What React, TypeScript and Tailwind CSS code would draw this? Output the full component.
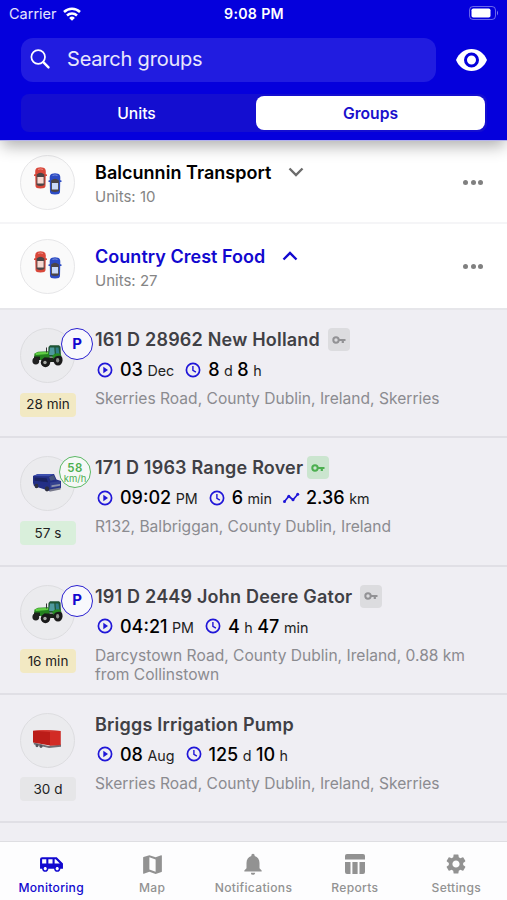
import type { ReactNode } from "react";
import { MdAirportShuttle, MdMap, MdNotifications, MdSettings } from "react-icons/md";

const groups = [
  { name: "Balcunnin Transport", units: 10, open: false },
  { name: "Country Crest Food", units: 27, open: true },
];

const units = [
  {
    name: "161 D 28962 New Holland",
    picture: <Tractor />,
    parked: true,
    ignition: "off",
    ago: "28 min",
    agoColor: "bg-[#f2e9c3]",
    start: ["03", "Dec"],
    duration: ["8", "d", "8", "h"],
    address: "Skerries Road, County Dublin, Ireland, Skerries",
  },
  {
    name: "171 D 1963 Range Rover",
    picture: <Jeep />,
    speed: 58,
    ignition: "on",
    ago: "57 s",
    agoColor: "bg-[#d9efdb]",
    start: ["09:02", "PM"],
    duration: ["6", "min"],
    distance: ["2.36", "km"],
    address: "R132, Balbriggan, County Dublin, Ireland",
  },
  {
    name: "191 D 2449 John Deere Gator",
    picture: <Tractor />,
    parked: true,
    ignition: "off",
    ago: "16 min",
    agoColor: "bg-[#f2e9c3]",
    start: ["04:21", "PM"],
    duration: ["4", "h", "47", "min"],
    address: "Darcystown Road, County Dublin, Ireland, 0.88 km from Collinstown",
  },
  {
    name: "Briggs Irrigation Pump",
    picture: <Trailer />,
    ago: "30 d",
    agoColor: "bg-[#e6e6e8]",
    start: ["08", "Aug"],
    duration: ["125", "d", "10", "h"],
    address: "Skerries Road, County Dublin, Ireland, Skerries",
  },
];

const tabs = [
  { label: "Monitoring", icon: <MdAirportShuttle className="size-[25px]" />, active: true },
  { label: "Map", icon: <MdMap className="size-[25px]" /> },
  { label: "Notifications", icon: <MdNotifications className="size-[26px]" /> },
  { label: "Reports", icon: <ReportsIcon /> },
  { label: "Settings", icon: <MdSettings className="size-6" /> },
];

export default function App() {
  return (
    <div className="flex h-[900px] w-[507px] flex-col overflow-hidden bg-[#efeef3] font-['Inter','Liberation_Sans',sans-serif] text-black">
      <Header />
      <main className="-mt-px min-h-0 flex-1 overflow-hidden">
        {groups.map((group) => (
          <GroupRow key={group.name} group={group} />
        ))}
        <div className="border-t-2 border-[#e6e6ea]">
          {units.map((unit) => (
            <UnitRow key={unit.name} unit={unit} />
          ))}
        </div>
      </main>
      <TabBar />
    </div>
  );
}

function Header() {
  return (
    <header className="z-10 h-[141px] shrink-0 border-b border-[#b3b1ee] bg-[#0500dc] text-white shadow-[0_7px_15px_-2px_rgba(0,0,0,0.32)]">
      <div className="grid h-7 grid-cols-3 items-center pr-2 pl-[9px]">
        <div className="flex items-center gap-1.5 text-[14.5px] text-white/90">
          Carrier
          <WifiIcon />
        </div>
        <div className="text-center text-[14.2px] font-semibold tracking-[0.3px] whitespace-nowrap">
          9:08 PM
        </div>
        <div className="flex justify-end pb-0.5">
          <BatteryIcon />
        </div>
      </div>
      <div className="flex items-center pt-2.5 pl-[21px]">
        <div className="flex h-11 w-[415px] items-center rounded-xl bg-[#211ce0] pb-0.5 pl-2">
          <SearchIcon />
          <span className="ml-[16px] text-[20px] tracking-[-0.2px] text-white/90">
            Search groups
          </span>
        </div>
        <EyeIcon />
      </div>
      <div className="mt-3 ml-[21px] flex h-[38px] w-[466px] items-center rounded-lg bg-[#140ed0] pr-0.5 text-[15.7px] font-medium">
        <div className="flex-1 pt-0.5 pr-1 text-center">Units</div>
        <div className="flex h-[34px] w-[229px] items-center justify-center rounded-lg bg-white pt-0.5 font-semibold text-[#1a10cc]">
          Groups
        </div>
      </div>
    </header>
  );
}

function GroupRow({ group }) {
  return (
    <div
      className={`flex h-[84px] items-start border-b-2 bg-white pt-[15px] pl-5 ${
        group.open ? "border-white" : "border-[#f5f5f7]"
      }`}
    >
      <div className="flex size-[55px] shrink-0 items-center justify-center rounded-full border border-[#e6e6e8] bg-[#fafafa]">
        <Cars />
      </div>
      <div className="ml-5 flex-1 pt-[5px]">
        <div
          className={`flex h-6 items-center text-[18px] font-semibold tracking-[0.03px] ${
            group.open ? "text-[#1208cf]" : ""
          }`}
        >
          {group.name}
          <svg
            className={`ml-[17px] h-2.5 w-4 ${group.open ? "rotate-180" : "text-[#6c6c6c]"}`}
            viewBox="0 0 16 10"
            fill="none"
            stroke="currentColor"
            strokeWidth="2.4"
          >
            <path d="M1.5 1.500 8 8l6.500-6.500" />
          </svg>
        </div>
        <div className="mt-0.5 text-[15px] leading-[21px] text-[#858585]">
          Units: {group.units}
        </div>
      </div>
      <div className="flex gap-[2.5px] pt-[25px] pr-6">
        <i className="size-[5px] rounded-full bg-[#808080]" />
        <i className="size-[5px] rounded-full bg-[#808080]" />
        <i className="size-[5px] rounded-full bg-[#808080]" />
      </div>
    </div>
  );
}

function UnitRow({ unit }) {
  return (
    <div className="flex h-[128.3px] items-start border-b-2 border-[#e0dfe5] pt-[18px] pl-5">
      <div className="relative w-14 shrink-0">
        <div className="flex size-[55px] items-center justify-center rounded-full border border-[#dddde0] bg-[#ebebee]">
          {unit.picture}
        </div>
        {unit.parked && (
          <div className="absolute top-0 left-[41px] flex size-8 items-center justify-center rounded-full border-[1.5px] border-[#2a20d0] bg-[#f8f8fc] text-[15px] font-bold text-[#1208cf]">
            P
          </div>
        )}
        {unit.speed && (
          <div className="absolute top-0 left-[39px] flex size-8 flex-col items-center justify-center rounded-full border-[1.5px] border-[#5cb865] bg-[#f5f8f6] text-[#4caf50]">
            <span className="text-[11.5px] leading-[12px] font-semibold tracking-[0.5px]">
              {unit.speed}
            </span>
            <span className="text-[9.5px] leading-[9px]">km/h</span>
          </div>
        )}
        <div
          className={`mt-[9.5px] flex h-6 items-center justify-center rounded-[4px] text-[13.5px] text-[#222] ${unit.agoColor}`}
        >
          {unit.ago}
        </div>
      </div>
      <div className="ml-[19px] w-[385px]">
        <div className="flex h-[23px] items-center text-[18px] font-semibold tracking-[0.2px] whitespace-nowrap text-[#404045]">
          {unit.name}
          {unit.ignition && (
            <span
              className={`flex h-[23px] w-[22px] items-center justify-center rounded-[4px] ${
                unit.ignition === "on"
                  ? "ml-1 bg-[#cbe5cf] text-[#4caf50]"
                  : "ml-2 bg-[#dcdcdf] text-[#929295]"
              }`}
            >
              <KeyIcon />
            </span>
          )}
        </div>
        <div className="mt-1.5 flex h-[25px] items-center text-[#2016d8]">
          <PlayIcon />
          <Measure parts={unit.start} />
          <ClockIcon />
          <Measure parts={unit.duration} />
          {unit.distance && (
            <>
              <TrackIcon />
              <Measure parts={unit.distance} />
            </>
          )}
        </div>
        <div className="mt-[7px] text-[15.6px] leading-[19px] text-[#8b8b90]">{unit.address}</div>
      </div>
    </div>
  );
}

// numbers are large, the units between them small
function Measure({ parts }: { parts: string[] }) {
  return (
    <span className="ml-1.5 flex items-baseline gap-[4.5px] whitespace-nowrap text-black">
      {parts.map((part, i) =>
        i % 2 === 0 ? (
          <span key={i} className="text-[18px] font-medium">
            {part}
          </span>
        ) : (
          <span key={i} className="text-[14.3px] text-[#222]">
            {part}
          </span>
        )
      )}
    </span>
  );
}

function TabBar() {
  return (
    <nav className="z-10 grid h-[59px] shrink-0 grid-cols-5 border-t border-[#dedee2] bg-[#fdfdfe]">
      {tabs.map((tab) => (
        <TabItem key={tab.label} label={tab.label} active={tab.active}>
          {tab.icon}
        </TabItem>
      ))}
    </nav>
  );
}

function TabItem({
  label,
  active,
  children,
}: {
  label: string;
  active?: boolean;
  children: ReactNode;
}) {
  return (
    <div
      className={`flex flex-col items-center pt-[9px] ${
        active ? "pl-px text-[#1208cf]" : "text-[#929292]"
      }`}
    >
      <div className="flex h-[26px] items-center">{children}</div>
      <span className="mt-0.5 text-[12.1px] leading-[17px] font-medium tracking-[0.3px]">
        {label}
      </span>
    </div>
  );
}

function PlayIcon() {
  return (
    <svg className="ml-px size-[18px]" viewBox="0 0 18 18" fill="none" stroke="currentColor">
      <circle cx="9" cy="9" r="6.6" strokeWidth="1.7" />
      <path d="M7.300 5.700 12 9l-4.700 3.300Z" fill="currentColor" stroke="none" />
    </svg>
  );
}

function ClockIcon() {
  return (
    <svg
      className="ml-2.5 size-[18px]"
      viewBox="0 0 18 18"
      fill="none"
      stroke="currentColor"
      strokeWidth="1.7"
    >
      <circle cx="9" cy="9" r="6.6" />
      <path d="M8.900 5v4.300l3 1.900" strokeWidth="1.400" />
    </svg>
  );
}

function TrackIcon() {
  return (
    <svg className="ml-2.5 size-[18px]" viewBox="0 0 18 18" fill="currentColor">
      <path
        d="m2.500 12.500 4.300-5.200 4.200 3.400 4.800-5.500"
        fill="none"
        stroke="currentColor"
        strokeWidth="1.700"
      />
      <circle cx="2.500" cy="12.500" r="1.500" />
      <circle cx="6.800" cy="7.300" r="1.500" />
      <circle cx="11" cy="10.700" r="1.500" />
      <circle cx="15.700" cy="5.300" r="1.500" />
    </svg>
  );
}

function KeyIcon() {
  return (
    <svg className="h-2 w-3.5" viewBox="0 0 14 8" fill="none" stroke="currentColor">
      <circle cx="4" cy="4" r="2.700" strokeWidth="2" />
      <path d="M6.800 4h6.700M10.800 4v3" strokeWidth="2.200" />
    </svg>
  );
}

function WifiIcon() {
  return (
    <svg className="h-3.5 w-[18px]" viewBox="0 0 18 14" fill="none" stroke="white" strokeWidth="2.5">
      <path d="M1 5a11.500 11.500 0 0 1 16 0M4 8.500a7.300 7.300 0 0 1 10 0" />
      <path d="M6.100 10.900a4.200 4.200 0 0 1 5.800 0L9 13.800Z" fill="white" stroke="none" />
    </svg>
  );
}

function BatteryIcon() {
  return (
    <svg className="h-3.5 w-[30px]" viewBox="0 0 30 14">
      <rect x=".5" y=".5" width="26" height="13" rx="3.5" fill="none" stroke="white" strokeOpacity=".4" />
      <rect x="2.5" y="2.5" width="19" height="9" rx="1.8" fill="white" />
      <path d="M28 4.500q2 2.500 0 5z" fill="white" fillOpacity=".5" />
    </svg>
  );
}

function SearchIcon() {
  return (
    <svg className="size-[22px]" viewBox="0 0 22 22" fill="none" stroke="white" strokeLinecap="round">
      <circle cx="9.2" cy="9" r="6.8" strokeWidth="1.7" />
      <path d="m14.300 14.200 5.200 5.200" strokeWidth="2.4" />
    </svg>
  );
}

function EyeIcon() {
  return (
    <svg className="ml-5 h-[22px] w-[31px]" viewBox="0 0 31 22">
      <path
        d="M15.500 0C8.500 0 2.500 4.600 0 11c2.500 6.400 8.500 11 15.500 11S28.500 17.400 31 11C28.500 4.600 22.500 0 15.500 0Z"
        fill="white"
      />
      <circle cx="15.5" cy="11" r="6" fill="white" stroke="#0500dc" strokeWidth="3" />
    </svg>
  );
}

function ReportsIcon() {
  return (
    <svg className="size-5" viewBox="0 0 20 20" fill="currentColor">
      <path d="M2 0h16a2 2 0 0 1 2 2v3.500H0V2a2 2 0 0 1 2-2Z" />
      <path d="M0 8h5.500v12H2a2 2 0 0 1-2-2ZM7.400 8h5.200v12H7.400ZM14.500 8H20v10a2 2 0 0 1-2 2h-3.500Z" />
    </svg>
  );
}

function Car({ x, y, body, glass }: { x: number; y: number; body: string; glass: string }) {
  return (
    <g transform={`translate(${x} ${y})`}>
      <path d="M0 7.500 2 7h9l2 .5v1.500H0z" fill={body} />
      <path
        d="M3.500.8Q6.500-.5 9.500.8 12 1.500 11.800 5l-.3 14q0 2.500-5 2.500t-5-2.500L1.200 5Q1 1.500 3.500.8Z"
        fill={body}
      />
      <path d="M4 2.500q2.500-1.200 5 0" fill="none" stroke="#fff" strokeOpacity=".35" />
      <path d="M2.600 7.500Q6.500 4 10.400 7.500L10.500 18q-4 2-8 0Z" fill="#4b4547" />
      <path d="M3.400 10h6.200v6.500H3.400z" fill={glass} />
    </g>
  );
}

function Cars() {
  return (
    <svg className="-mt-1 h-[30px] w-7" viewBox="0 0 28 30">
      <Car x={0} y={1} body="#d9483b" glass="#f7d9d2" />
      <Car x={14.5} y={7} body="#2c4cc4" glass="#c9daf8" />
    </svg>
  );
}

function Tractor() {
  return (
    <svg className="h-6 w-[31px]" viewBox="0 0 31 24">
      <path d="M16.500 3 18 1.200h9l1.500 1.500.5 10H16Z" fill="#1e5434" />
      <path d="M18 3.500h4.300l.5 7.500H17Z" fill="#4f9a9e" />
      <path d="M23.500 3.500h3l.8 6.500h-3.300Z" fill="#2f7d88" />
      <path d="M2.500 9.500 6 7.700l10.500-.4 1.500 8.200-6 1.500L2 14Z" fill="#24831f" />
      <path d="m3 9.500 3-1.300 10-.2v2L4 11Z" fill="#62cf45" />
      <path d="M2 12.500h6v3.500H2zM12 13.500h10v4.500H12z" fill="#1a231a" />
      <path d="M14.500 3.500v5" stroke="#333" />
      <circle cx="3.8" cy="17" r="3.4" fill="#202020" />
      <circle cx="13.5" cy="18.5" r="4.7" fill="#1a1a1a" />
      <circle cx="13" cy="18.5" r="1.7" fill="#a8aba6" />
      <ellipse cx="26" cy="16" rx="4.6" ry="5.6" fill="#1a1a1a" />
      <ellipse cx="25.6" cy="16.3" rx="1.6" ry="2.2" fill="#8c918b" />
      <path d="M20 12q3-4 8.500-2l1 2q-6-1-8 3Z" fill="#278c25" />
    </svg>
  );
}

function Jeep() {
  return (
    <svg className="-mt-0.5 mr-0.5 h-5 w-[30px]" viewBox="0 0 30 20">
      <path d="M1 3 6 1h16l2.500 5.500 4.500 1.500v7l-11 3-2-.5L2 13 1 10Z" fill="#232f86" />
      <path d="M1 3 6 1h16l-5 2.200Z" fill="#3c4fae" />
      <path d="m2.500 4.500 12 .7 1.500 4L2.500 7.800Z" fill="#1a2360" />
      <path d="m17 4 4.500-2 2.300 4.500-5.300 1.300Z" fill="#47567f" />
      <path d="m18 9.500 10.500-1.500v5.500L18 15.200Z" fill="#33418f" />
      <path d="m19.500 12.300 8.500-1.300v1.800l-8.500 1.400Z" fill="#8d93ab" />
      <ellipse cx="4.500" cy="13" rx="1.900" ry="2.300" fill="#2f3040" />
      <ellipse cx="15" cy="15.800" rx="2.200" ry="2.600" fill="#2f3040" />
      <path d="m17.500 16.500 11-2v2l-11 2.200Z" fill="#77798a" />
    </svg>
  );
}

function Trailer() {
  return (
    <svg className="-mt-0.5 mr-0.5 h-5 w-[30px]" viewBox="0 0 30 20">
      <path d="m1.500 13.500 15 3.500 12.500-1.500v2.200L17 19 2 15.500Z" fill="#6f6d73" />
      <path d="M1 1.800 13 1l15.500 1v14L18 16.500 1 13.500Z" fill="#bb1c18" />
      <path d="M18 2.800 28.500 2v14L18 16.500Z" fill="#d22b25" />
      <path d="M1 1.800 13 1l15.500 1L18 2.800Z" fill="#d9403a" />
      <ellipse cx="5" cy="16.500" rx="1.500" ry="1.700" fill="#56545b" />
      <ellipse cx="9" cy="17.200" rx="1.500" ry="1.700" fill="#56545b" />
    </svg>
  );
}
